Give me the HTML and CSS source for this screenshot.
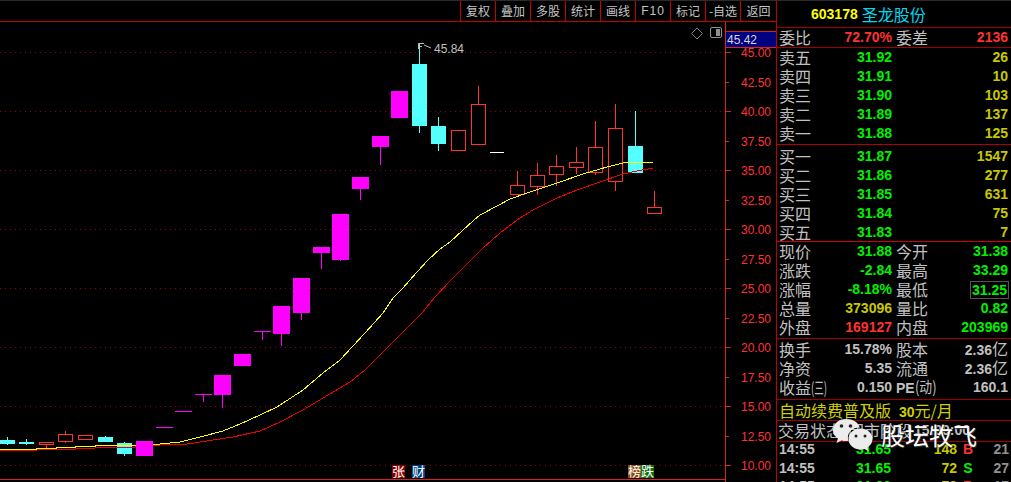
FILE: index.html
```html
<!DOCTYPE html>
<html lang="zh">
<head>
<meta charset="utf-8">
<title>圣龙股份</title>
<link rel="stylesheet" href="styles.css">
</head>
<body>
<div class="page">
  <main class="left">
    <nav class="toolbar">
      <span class="tool">复权</span><span class="tool">叠加</span><span class="tool">多股</span><span class="tool">统计</span><span class="tool">画线</span><span class="tool tool-f">F10</span><span class="tool">标记</span><span class="tool">-自选</span><span class="tool tool-last">返回</span>
    </nav>
    <svg class="chart" width="776" height="460" viewBox="0 22 776 460">
      <path class="grid" d="M0 52.5H725M0 111.5H725M0 170.5H725M0 229.5H725M0 288.5H725M0 347.5H725M0 406.5H725M0 465.5H725"/>
      <path class="axis" d="M725.5 22V482M0 479.5H725M726 31.5H776M726 47.5H776"/>
      <path class="axis" d="M726 52.5H731M726 82.5H729M726 111.5H731M726 141.5H729M726 170.5H731M726 200.5H729M726 229.5H731M726 259.5H729M726 288.5H731M726 318.5H729M726 347.5H731M726 377.5H729M726 406.5H731M726 436.5H729M726 465.5H731"/>
      <rect class="price-box" x="726" y="32" width="50" height="15"/>
      <text class="price-now" x="727" y="44">45.42</text>
      <g class="axis-text">
        <text x="741" y="57">45.00</text><text x="741" y="87">42.50</text><text x="741" y="116">40.00</text><text x="741" y="146">37.50</text><text x="741" y="175">35.00</text><text x="741" y="205">32.50</text><text x="741" y="234">30.00</text><text x="741" y="264">27.50</text><text x="741" y="293">25.00</text><text x="741" y="323">22.50</text><text x="741" y="352">20.00</text><text x="741" y="382">17.50</text><text x="741" y="411">15.00</text><text x="741" y="441">12.50</text><text x="741" y="470">10.00</text>
      </g>

      <path class="wick-m" d="M203.5 394V402M222.5 395V408M262.5 331V340M281.5 334V346M301.5 313V320M321.5 253V269M340.5 260V261M360.5 189V200M380.5 147V165"/>
      <g class="up">
        <rect x="156" y="427" width="17" height="1"/>
        <rect x="175" y="411" width="17" height="1"/>
        <rect x="195" y="394" width="17" height="1"/>
        <rect x="214" y="375" width="17" height="20"/>
        <rect x="234" y="354" width="17" height="12"/>
        <rect x="254" y="331" width="17" height="1"/>
        <rect x="273" y="306" width="17" height="28"/>
        <rect x="293" y="278" width="17" height="35"/>
        <rect x="313" y="247" width="17" height="6"/>
        <rect x="332" y="214" width="17" height="46"/>
        <rect x="352" y="177" width="17" height="12"/>
        <rect x="372" y="136" width="17" height="11"/>
        <rect x="391" y="91" width="17" height="27"/>
      </g>

      <path class="wick-c" d="M7.5 437V445M26.5 439V445M105.5 436V437M124.5 442V456M419.5 43V133M438.5 117V151M635.5 111V146"/>
      <g class="down">
        <rect x="0" y="440" width="15" height="4"/>
        <rect x="19" y="442" width="15" height="2"/>
        <rect x="98" y="437" width="15" height="5"/>
        <rect x="117" y="443" width="15" height="11"/>
        <rect x="412" y="64" width="15" height="62"/>
        <rect x="431" y="126" width="15" height="18"/>
        <rect x="628" y="146" width="15" height="27"/>
      </g>

      <path class="wick-r" d="M46.5 445V448M65.5 431V434M65.5 442V443M478.5 86V104M517.5 171V185M537.5 163V175M537.5 186V195M556.5 155V166M556.5 174V186M576.5 147V162M576.5 167V174M595.5 121V147M595.5 172V175M615.5 104V128M615.5 181V191M654.5 191V207"/>
      <g class="hollow">
        <rect x="39.5" y="442.5" width="14" height="2"/>
        <rect x="58.5" y="434.5" width="14" height="7"/>
        <rect x="78.5" y="435.5" width="14" height="4"/>
        <rect x="451.5" y="130.5" width="14" height="20"/>
        <rect x="471.5" y="104.5" width="14" height="40"/>
        <rect x="510.5" y="185.5" width="14" height="9"/>
        <rect x="530.5" y="175.5" width="14" height="11"/>
        <rect x="549.5" y="166.5" width="14" height="8"/>
        <rect x="569.5" y="162.5" width="14" height="5"/>
        <rect x="588.5" y="147.5" width="14" height="25"/>
        <rect x="608.5" y="128.5" width="14" height="53"/>
        <rect x="647.5" y="207.5" width="14" height="6"/>
      </g>
      <rect class="flat" x="490" y="152" width="14" height="1"/>

      <polyline class="ma-red" points="0,450.500 36,450.500 36,449 75,449 75,448 95,448 115,447 135,447 160,445 187,444 207,441 233,437 260,431 280,422 303,410 323,398 350,382 365,370 377,358 390,345 408,327 422,313 435,297 450,281 467,264 483,248 500,233 520,218 533,210 557,198 577,190 600,182 623,174 637,171 653,168"/>
      <polyline class="ma-yellow" points="0,449.500 36,449.500 36,448 56,448 56,447 75,447 75,446 95,446 95,445 115,445 134,446 160,444 180,442 200,437 223,431 240,424 260,415 277,407 303,390 323,373 340,360 365,333 383,313 393,298 403,288 417,272 428,260 440,249 450,242 463,230 473,221 480,215 497,206 510,199 530,192 557,183 583,174 607,167 623,163 637,162 653,163"/>
      <rect class="up" x="136" y="441" width="17" height="15"/>

      <path class="flag" d="M418.5 49V43.5H424M418.5 46.5H422M424 45L431 48"/>
      <text class="peak" x="434" y="53">45.84</text>

      <path class="diamond" d="M697 28L702.500 33.500 697 39 691.500 33.500Z"/>
      <rect class="toggle" x="710.500" y="27.500" width="11" height="10" rx="1.500"/>
      <rect class="toggle-fill" x="716" y="29" width="4" height="7"/>

      <rect class="tag-red" x="392" y="465" width="13" height="13"/>
      <text class="tag" x="392" y="476">张</text>
      <rect class="tag-blue" x="412" y="465" width="13" height="13"/>
      <text class="tag" x="412" y="476">财</text>
      <rect class="tag-brown" x="628" y="465" width="13" height="13"/>
      <text class="tag" x="628" y="476">榜</text>
      <rect class="tag-green" x="641" y="465" width="13" height="13"/>
      <text class="tag" x="641" y="476">跌</text>
    </svg>
  </main>

  <aside class="panel">
    <header class="title"><span class="code">603178</span><span class="name">圣龙股份</span></header>
    <section class="sec sec-ratio">
      <div class="row"><span class="lb">委比</span><span class="val red">72.70%</span><span class="lb">委差</span><span class="val red">2136</span></div>
    </section>
    <section class="sec sec-book">
      <div class="row"><span class="lb">卖五</span><span class="val green">31.92</span><span></span><span class="val yellow">26</span></div>
      <div class="row"><span class="lb">卖四</span><span class="val green">31.91</span><span></span><span class="val yellow">10</span></div>
      <div class="row"><span class="lb">卖三</span><span class="val green">31.90</span><span></span><span class="val yellow">103</span></div>
      <div class="row"><span class="lb">卖二</span><span class="val green">31.89</span><span></span><span class="val yellow">137</span></div>
      <div class="row"><span class="lb">卖一</span><span class="val green">31.88</span><span></span><span class="val yellow">125</span></div>
    </section>
    <section class="sec sec-buy">
      <div class="row"><span class="lb">买一</span><span class="val green">31.87</span><span></span><span class="val yellow">1547</span></div>
      <div class="row"><span class="lb">买二</span><span class="val green">31.86</span><span></span><span class="val yellow">277</span></div>
      <div class="row"><span class="lb">买三</span><span class="val green">31.85</span><span></span><span class="val yellow">631</span></div>
      <div class="row"><span class="lb">买四</span><span class="val green">31.84</span><span></span><span class="val yellow">75</span></div>
      <div class="row"><span class="lb">买五</span><span class="val green">31.83</span><span></span><span class="val yellow">7</span></div>
    </section>
    <section class="sec sec-quote">
      <div class="row"><span class="lb">现价</span><span class="val green">31.88</span><span class="lb">今开</span><span class="val green">31.38</span></div>
      <div class="row"><span class="lb">涨跌</span><span class="val green">-2.84</span><span class="lb">最高</span><span class="val green">33.29</span></div>
      <div class="row"><span class="lb">涨幅</span><span class="val green">-8.18%</span><span class="lb">最低</span><span class="val green val-boxed"><span class="boxed">31.25</span></span></div>
      <div class="row"><span class="lb">总量</span><span class="val yellow">373096</span><span class="lb">量比</span><span class="val green">0.82</span></div>
      <div class="row"><span class="lb">外盘</span><span class="val red">169127</span><span class="lb">内盘</span><span class="val green">203969</span></div>
    </section>
    <section class="sec sec-fund">
      <div class="row"><span class="lb">换手</span><span class="val gray">15.78%</span><span class="lb">股本</span><span class="val gray">2.36<span class="unit">亿</span></span></div>
      <div class="row"><span class="lb">净资</span><span class="val gray">5.35</span><span class="lb">流通</span><span class="val gray">2.36<span class="unit">亿</span></span></div>
      <div class="row"><span class="lb">收益<span class="squeeze-a">(三)</span></span><span class="val gray">0.150</span><span class="lb"><span class="pe">PE</span><span class="squeeze-b">(动)</span></span><span class="val gray">160.1</span></div>
    </section>
    <section class="sec sec-ad">自动续费普及版<span class="ad-price"><b class="ad-num">30</b>元/月</span></section>
    <section class="sec sec-state"><span>交易状态</span><span class="state-mid">闭市阶段</span><span class="state-time">15:00:00</span></section>
    <section class="trades">
      <div class="trade"><span class="t-time">14:55</span><span class="t-price">31.65</span><span class="t-vol">148</span><span class="t-side red">B</span><span class="t-count">21</span></div>
      <div class="trade"><span class="t-time">14:55</span><span class="t-price">31.65</span><span class="t-vol">72</span><span class="t-side green">S</span><span class="t-count">27</span></div>
      <div class="trade"><span class="t-time">14:55</span><span class="t-price">31.68</span><span class="t-vol">78</span><span class="t-side red">B</span><span class="t-count">17</span></div>
    </section>
  </aside>
</div>

<div class="watermark">
  <svg class="wm-icon" width="42" height="34" viewBox="0 0 42 34">
    <path class="wm-big" d="M14 1C6.800 1 1 5.900 1 12c0 3.500 1.900 6.500 4.900 8.500L4.500 25l5-2.600c1.400.4 2.900.6 4.500.6 1 0 1.500 0 2.500-.2-.4-1.200-.6-2.200-.6-3.400C15.900 13.600 21 9.400 27 9.400c.2 0 .6 0 .8 0C26.400 4.500 20.800 1 14 1z"/>
    <circle class="wm-eye" cx="9.500" cy="8" r="1.800"/>
    <circle class="wm-eye" cx="18.500" cy="8" r="1.800"/>
    <path class="wm-big" d="M40.500 21c0-6-5.400-10.500-12-10.500S16.500 15 16.500 21s5.400 10.500 12 10.500c1.400 0 2.700-.2 3.900-.6l4.100 2.100-1.100-3.600c2.800-2 5.100-5 5.100-8z"/>
    <circle class="wm-eye" cx="24" cy="18" r="1.500"/>
    <circle class="wm-eye" cx="33" cy="18" r="1.500"/>
  </svg>
  <span class="wm-text">股坛牧飞</span>
</div>
</body>
</html>
```
FILE: styles.css
```css
* { box-sizing: border-box; }
html, body { margin: 0; padding: 0; background: #000; }
body {
  width: 1011px;
  height: 482px;
  overflow: hidden;
  position: relative;
  font-family: "Liberation Sans", "Noto Sans CJK SC", sans-serif;
  color: #c0c0c0;
}
.page { display: flex; width: 1011px; height: 482px; }
.left { width: 776px; flex: none; display: flex; flex-direction: column; }

.toolbar {
  height: 22px;
  flex: none;
  display: flex;
  justify-content: flex-end;
  border-bottom: 1px solid #c80000;
  border-top: 1px solid #2a2a2a;
}
.tool {
  width: 35px;
  border-left: 1px solid #c80000;
  font: 12px/20px "Noto Sans CJK SC", sans-serif;
  text-align: center;
  color: #c4c4c4;
  white-space: nowrap;
}
.tool-f { font-family: "Liberation Sans", sans-serif; letter-spacing: 1px; }
.tool-last { width: 36px; }

.chart { display: block; flex: none; }
.grid { stroke: #9a0000; stroke-width: 1; stroke-dasharray: 1 4; fill: none; shape-rendering: crispEdges; }
.axis { stroke: #e02020; stroke-width: 1; fill: none; shape-rendering: crispEdges; }
.price-box { fill: #000080; }
.price-now { font: 12px "Liberation Sans", sans-serif; fill: #d8d8d8; }
.axis-text { font: 12px "Liberation Sans", sans-serif; fill: #ff3232; }
.up { fill: #ff00ff; shape-rendering: crispEdges; }
.down { fill: #54ffff; shape-rendering: crispEdges; }
.hollow { fill: #000; stroke: #ff3232; stroke-width: 1; shape-rendering: crispEdges; }
.flat { fill: #fff; }
.wick-m { stroke: #ff00ff; fill: none; shape-rendering: crispEdges; }
.wick-c { stroke: #54ffff; fill: none; shape-rendering: crispEdges; }
.wick-r { stroke: #ff3232; fill: none; shape-rendering: crispEdges; }
.ma-red { fill: none; stroke: #ee0000; stroke-width: 1; shape-rendering: crispEdges; }
.ma-yellow { fill: none; stroke: #ffff00; stroke-width: 1; shape-rendering: crispEdges; }
.flag { fill: none; stroke: #c0c0c0; stroke-width: 1; }
.peak { font: 12px "Liberation Sans", sans-serif; fill: #c0c0c0; }
.diamond { fill: none; stroke: #808080; stroke-width: 1; }
.toggle { fill: #000; stroke: #909090; stroke-width: 1; }
.toggle-fill { fill: #909090; }
.tag { font: 13px "Noto Sans CJK SC", sans-serif; fill: #fff; }
.tag-red { fill: #8a0000; }
.tag-blue { fill: #004080; }
.tag-brown { fill: #8a5010; }
.tag-green { fill: #107010; }

.panel {
  flex: none;
  width: 235px;
  height: 482px;
  overflow: hidden;
  border-left: 1px solid #c00000;
  border-top: 1px solid #2a2a2a;
}
.title {
  height: 26px;
  display: flex;
  align-items: center;
  padding-left: 34px;
  gap: 4px;
}
.code { font: bold 14px "Liberation Sans", sans-serif; color: #ffff00; }
.name { font: 16px "Noto Sans CJK SC", sans-serif; color: #00d8f0; }
.sec { border-top: 1px solid #a00000; }
.sec-ratio { height: 20px; }
.sec-book { height: 97px; }
.sec-buy { height: 97px; padding-top: 2px; border-top-color: #b00000; }
.sec-quote { height: 97px; border-top-color: #d00000; }
.sec-fund { height: 61px; }
.row {
  height: 19px;
  display: grid;
  grid-template-columns: 32px 81px 4px 32px 80px;
  padding-left: 2px;
  align-items: center;
}
.row > :nth-child(3) { grid-column: 4; }
.row > :nth-child(4) { grid-column: 5; }
.row > :nth-child(2) { grid-column: 2; }
.lb { font: 16px/19px "Noto Sans CJK SC", sans-serif; color: #c0c0c0; white-space: nowrap; }
.val { font: bold 14px/19px "Liberation Sans", sans-serif; text-align: right; white-space: nowrap; }
.unit { font: 16px/19px "Noto Sans CJK SC", sans-serif; }
.squeeze-a { display: inline-block; transform: scaleX(0.6); transform-origin: left center; }
.squeeze-b { display: inline-block; transform: scaleX(0.8); transform-origin: left center; }
.pe { font: bold 14px/19px "Liberation Sans", sans-serif; }
.red { color: #ff3232; }
.green { color: #00f000; }
.yellow { color: #c8c800; }
.gray { color: #c0c0c0; }
.val-boxed { line-height: 17px; }
.boxed { display: inline-block; width: 39px; border: 1px solid #555; line-height: 16px; padding-right: 1px; margin-right: -1px; }

.sec-ad {
  height: 21px;
  font: 16px/20px "Noto Sans CJK SC", sans-serif;
  color: #d0d000;
  padding-left: 2px;
  white-space: nowrap;
}
.ad-price { margin-left: 8px; }
.ad-num { font: bold 14px/20px "Liberation Sans", sans-serif; }
.sec-state {
  height: 21px;
  font: 16px/19px "Noto Sans CJK SC", sans-serif;
  color: #c0c0c0;
  display: flex;
  padding-left: 1px;
  white-space: nowrap;
}
.state-mid { margin-left: 6px; }
.state-time { margin-left: 2px; font: bold 14px/19px "Liberation Sans", sans-serif; }
.trades { border-top: 1px solid #a00000; }
.trade {
  height: 18.500px;
  display: grid;
  grid-template-columns: 38px 74px 66px 22px 30px;
  padding-left: 2px;
  font: bold 14px/15px "Liberation Sans", sans-serif;
  white-space: nowrap;
}
.t-time { color: #c0c0c0; }
.t-price { color: #00f000; text-align: right; }
.t-vol { color: #c8c800; text-align: right; }
.t-side { text-align: center; }
.t-count { color: #909090; text-align: right; }

.watermark {
  position: absolute;
  left: 832px;
  top: 418px;
  display: flex;
  align-items: center;
  gap: 7px;
}
.wm-icon { display: block; }
.wm-big { fill: #ececec; }
.wm-eye { fill: #222; }
.wm-text {
  font: 24px/34px "Noto Sans CJK SC", sans-serif;
  color: #fff;
  text-shadow: 1px 1px 1px #333;
  white-space: nowrap;
}
```
